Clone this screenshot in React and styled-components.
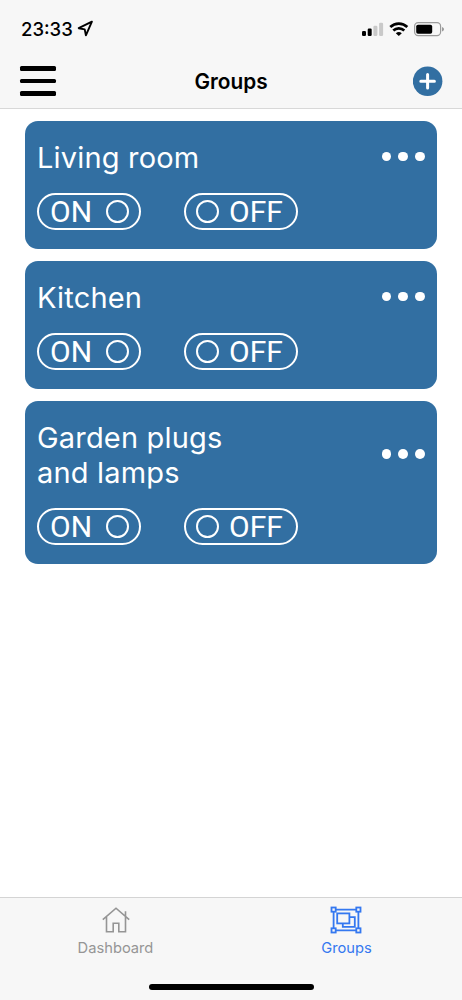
import React from "react";
import styled, { createGlobalStyle } from "styled-components";

const groups = [
  { id: 1, name: "Living room" },
  { id: 2, name: "Kitchen" },
  { id: 3, name: "Garden plugs and lamps" },
];

const App = () => {
  return (
    <>
      <GlobalStyle />
      <Screen>
        <Header>
          <StatusBar>
            <Clock>
              <span>23:33</span>
              <LocationIcon />
            </Clock>
            <StatusIcons />
          </StatusBar>
          <NavBar>
            <MenuButton aria-label="Menu">
              <i />
              <i />
              <i />
            </MenuButton>
            <Title>Groups</Title>
            <AddButton aria-label="Add group">
              <svg width="30" height="30" viewBox="0 0 30 30">
                <circle cx="14.6" cy="15.2" r="14.8" fill="#326fa2" />
                <path
                  d="M14.6 8.4v13.6M7.8 15.2h13.6"
                  stroke="#fff"
                  strokeWidth="3"
                  strokeLinecap="round"
                />
              </svg>
            </AddButton>
          </NavBar>
        </Header>
        <GroupList>
          {groups.map((group) => (
            <GroupCard key={group.id} name={group.name} />
          ))}
        </GroupList>
        <Footer>
          <Tabs>
            <Tab>
              <HomeIcon />
              <span>Dashboard</span>
            </Tab>
            <Tab $active>
              <GroupIcon />
              <span>Groups</span>
            </Tab>
          </Tabs>
          <HomeIndicator />
        </Footer>
      </Screen>
    </>
  );
};

const GroupCard = ({ name }) => (
  <Card>
    <CardTop>
      <CardName>{name}</CardName>
      <MoreButton aria-label="More">
        <i />
        <i />
        <i />
      </MoreButton>
    </CardTop>
    <Switches>
      <Pill $width={104}>
        <span>ON</span>
        <Knob />
      </Pill>
      <Pill $width={114}>
        <Knob />
        <span>OFF</span>
      </Pill>
    </Switches>
  </Card>
);

const LocationIcon = () => (
  <svg width="17" height="17" viewBox="0 0 17 17" fill="none">
    <path
      d="M14.9 1.7 1.7 8.2l6 1.2 1.2 5.9z"
      stroke="#000"
      strokeWidth="1.9"
      strokeLinejoin="round"
    />
  </svg>
);

const StatusIcons = () => (
  <svg width="84" height="16" viewBox="0 0 84 16">
    {/* signal */}
    <rect x="1" y="10" width="4" height="5" rx="1.2" />
    <rect x="6.7" y="7.5" width="4" height="7.5" rx="1.2" />
    <rect x="12.4" y="4.7" width="4" height="10.3" rx="1.2" fill="#c9c9c9" />
    <rect x="18.1" y="1.8" width="4" height="13.2" rx="1.2" fill="#c9c9c9" />
    {/* wifi */}
    <g fill="none" stroke="#000" strokeWidth="2.7">
      <path d="M29.3 6.1a12.3 12.3 0 0 1 17 0" />
      <path d="M32.3 9.5a8 8 0 0 1 11 0" />
    </g>
    <path d="M37.8 15 34.8 12.3a4.4 4.4 0 0 1 6 0z" />
    {/* battery */}
    <rect
      x="53.6"
      y="1.7"
      width="26"
      height="12.9"
      rx="3.6"
      fill="none"
      stroke="#9b9b9b"
      strokeWidth="1.2"
    />
    <rect x="55.2" y="3.7" width="16" height="9" rx="1.8" />
    <path d="M81 6v4.4c1.4-.5 2-1.3 2-2.2S82.4 6.5 81 6z" fill="#9b9b9b" />
  </svg>
);

const HomeIcon = () => (
  <svg width="28" height="26" viewBox="0 0 28 26" fill="none">
    <path
      d="M.8 12.6 14 1.2l13.2 11.4M4.5 9.8v15h6.7v-8.500h5.600v8.500h6.700v-15M23.500 9V4.200"
      stroke="currentColor"
      strokeWidth="1.6"
    />
  </svg>
);

const GroupIcon = () => (
  <svg width="33" height="28" viewBox="0 0 33 28" fill="none">
    <g stroke="currentColor" strokeWidth="1.8">
      <path d="M5.600 3.600h20.800M5.600 24.400h20.800M3.600 5.600v16.800M28.400 5.600v16.800" />
      <rect x="1.500" y="1.500" width="4.200" height="4.200" />
      <rect x="26.300" y="1.500" width="4.200" height="4.200" />
      <rect x="1.500" y="22.300" width="4.200" height="4.200" />
      <rect x="26.300" y="22.300" width="4.200" height="4.200" />
      <rect x="7.200" y="7.400" width="12.200" height="10" />
      <path d="M19.400 11.200h5.400v9.600H12.800v-3.400" />
    </g>
  </svg>
);

const GlobalStyle = createGlobalStyle`
  * {
    box-sizing: border-box;
  }
  body {
    margin: 0;
    background: #fff;
    font-family: Inter, "Liberation Sans", sans-serif;
  }
  button {
    padding: 0;
    border: none;
    background: none;
    color: inherit;
    font: inherit;
  }
  svg {
    display: block;
    flex-shrink: 0;
  }
`;

const Screen = styled.div`
  width: 462px;
  height: 1000px;
  display: flex;
  flex-direction: column;
  overflow: hidden;
`;

const Header = styled.header`
  height: 109px;
  background: #f7f7f7;
  border-bottom: 1px solid #d8d8d8;
`;

const StatusBar = styled.div`
  height: 54px;
  padding: 3px 17px 0 21px;
  display: flex;
  align-items: center;
  justify-content: space-between;
`;

const Clock = styled.div`
  display: flex;
  align-items: center;
  gap: 3px;
  font-size: 18.5px;
  font-weight: 500;
  span {
    width: 53px;
    white-space: nowrap;
  }
`;

const NavBar = styled.nav`
  height: 54px;
  padding: 0 19px;
  display: grid;
  grid-template-columns: 1fr auto 1fr;
  align-items: center;
`;

const MenuButton = styled.button`
  width: 36px;
  margin-left: 0.6px;
  display: flex;
  flex-direction: column;
  gap: 8px;
  i {
    height: 4.6px;
    border-radius: 1.5px;
    background: #000;
  }
`;

const Title = styled.h1`
  margin: 0;
  padding-top: 2px;
  font-size: 20.8px;
  font-weight: 600;
  line-height: 26px;
`;

const AddButton = styled.button`
  justify-self: end;
`;

const GroupList = styled.main`
  flex: 1;
  padding: 12px 25px;
  display: flex;
  flex-direction: column;
  gap: 12.5px;
`;

const Card = styled.section`
  padding: 17px 12px 18.5px;
  border-radius: 13px;
  background: #326fa2;
  color: #fff;
`;

const CardTop = styled.div`
  display: flex;
  align-items: center;
  justify-content: space-between;
`;

const CardName = styled.h2`
  width: 220px;
  margin: 0;
  padding-top: 2px;
  font-size: 29px;
  font-weight: 400;
  line-height: 35px;
  letter-spacing: 0.18px;
`;

const MoreButton = styled.button`
  display: flex;
  gap: 7px;
  i {
    width: 9.8px;
    height: 9.8px;
    border-radius: 50%;
    background: #fff;
  }
`;

const Switches = styled.div`
  display: flex;
  gap: 43px;
  margin-top: 18px;
`;

const Pill = styled.button`
  width: ${({ $width }) => $width}px;
  height: 37px;
  padding: 0 10px;
  display: flex;
  align-items: center;
  gap: 10px;
  border: 2px solid #fff;
  border-radius: 19px;
  font-family: Roboto, "Liberation Sans", sans-serif;
  font-size: 30px;
  line-height: 33px;
  span {
    white-space: nowrap;
  }
  span:first-child {
    padding-left: 1px;
  }
  span:first-child + i {
    margin-left: auto;
  }
`;

const Knob = styled.i`
  width: 23px;
  height: 23px;
  flex-shrink: 0;
  border: 2px solid #fff;
  border-radius: 50%;
`;

const Footer = styled.footer`
  height: 103px;
  background: #f7f7f7;
  border-top: 1px solid #d4d4d4;
`;

const Tabs = styled.div`
  height: 86px;
  display: grid;
  grid-template-columns: 1fr 1fr;
`;

const Tab = styled.button`
  padding-top: 8px;
  display: flex;
  flex-direction: column;
  align-items: center;
  color: ${({ $active }) => ($active ? "#3478f0" : "#959595")};
  svg {
    height: 28px;
  }
  span {
    margin-top: 4px;
    font-size: 14.7px;
    line-height: 20px;
  }
`;

const HomeIndicator = styled.div`
  width: 165px;
  height: 6px;
  margin: 0 auto;
  border-radius: 3px;
  background: #000;
`;

export default App;
